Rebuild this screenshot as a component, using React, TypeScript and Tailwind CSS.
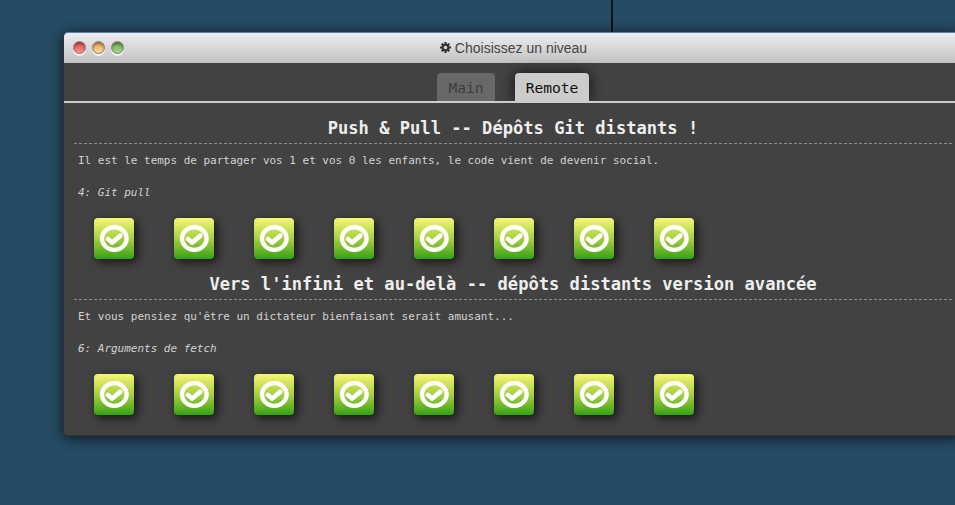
import React from "react";

const MONO = "font-['DejaVu_Sans_Mono',monospace]";

function LevelIcon() {
  return (
    <div className="flex h-[41px] w-10 items-center justify-center rounded-[4px] bg-linear-to-b from-[#f9f575] via-[#a3d040] to-[#2ea30d] shadow-[3px_3px_10px_rgba(0,0,0,0.7)]">
      <svg width="30" height="28" viewBox="0 0 30 28" fill="none" stroke="#fff" className="block">
        <ellipse cx="15.3" cy="13.4" rx="12.3" ry="11.4" strokeWidth="4.3" />
        <path d="M8.9 14 L13.3 17.6 L21.3 10.7" strokeWidth="4.6" strokeLinejoin="round" strokeLinecap="round" />
      </svg>
    </div>
  );
}

function Section({ title, about, level }: { title: string; about: string; level: string }) {
  return (
    <section className="h-[156px]">
      <h3 className="h-8 border-b border-dashed border-[#8e8e8e] text-center text-[17.1px] leading-[32px] font-bold text-[#eee]">
        {title}
      </h3>
      <p className="h-8 pl-[4px] text-[10.97px] leading-[34px] whitespace-nowrap text-[#d2d2d2]">{about}</p>
      <p className="h-8 pl-[4px] text-[10.97px] leading-[34px] whitespace-nowrap text-[#d2d2d2] italic">{level}</p>
      <div className="flex gap-10 pt-[10px] pl-5">
        {Array.from({ length: 8 }, (_, i) => (
          <LevelIcon key={i} />
        ))}
      </div>
    </section>
  );
}

function TrafficLight({ color }: { color: string }) {
  return (
    <span
      className={`h-[13px] w-[13px] rounded-full border border-[#85807c] shadow-[0_2px_0_rgba(255,255,255,0.8),inset_0_2px_2px_rgba(80,30,20,0.45)] ${color}`}
    />
  );
}

export default function App() {
  return (
    <main className="h-[505px] w-full overflow-hidden bg-[#264b64]">
      <div className="h-8 pl-[611px]">
        <div className="h-full w-[2px] bg-[#111]" />
      </div>
      <div className="ml-[63px] h-[404px] w-[900px] overflow-visible rounded-[5px] border border-[#303234] border-t-[#5784a6] bg-[#424242] shadow-[0_2px_14px_rgba(0,0,0,0.7)]">
        <header className="flex h-[30px] items-center rounded-t-[4px] bg-linear-to-b from-[#efedef] to-[#c2c2c2] pl-[10px]">
          <div className="-ml-px flex w-[101px] gap-[6px] pb-px">
            <TrafficLight color="bg-linear-to-b from-[#d94b4b] to-[#ff8c8c]" />
            <TrafficLight color="bg-linear-to-b from-[#dfa24e] to-[#ffd99b]" />
            <TrafficLight color="bg-linear-to-b from-[#62a84f] to-[#a4dc8c]" />
          </div>
          <div className="mr-[109px] flex flex-1 items-center justify-center gap-[4px] font-['Liberation_Sans',Arial,sans-serif] text-[14px] text-[#444]">
            <svg width="11" height="11" viewBox="0 0 12 12" className="mb-[2px] block">
              <g stroke="#333" strokeWidth="2.2">
                <path d="M6 0V12M0 6H12M1.8 1.8L10.2 10.2M10.2 1.8L1.8 10.2" />
              </g>
              <circle cx="6" cy="6" r="4.3" fill="#333" />
              <circle cx="6" cy="6" r="1.9" fill="#d9d9d9" />
            </svg>
            <span>Choisissez un niveau</span>
          </div>
        </header>
        <div className={MONO}>
          <nav className="flex h-10 items-end justify-center gap-5 border-b-2 border-[#ccc] text-[14.6px]">
            <div className="h-7 w-[58px] rounded-t-[4px] bg-[#686868] text-center leading-[29px] text-[#3c3c3c]">Main</div>
            <div className="h-7 w-[74px] rounded-t-[4px] bg-[#ccc] text-center leading-[29px] text-[#111] shadow-[0_0_14px_rgba(0,0,0,0.75)] [clip-path:inset(-20px_-20px_0_-20px)]">
              Remote
            </div>
          </nav>
          <div className="px-[10px] pt-[9px]">
            <Section
              title="Push & Pull -- Dépôts Git distants !"
              about="Il est le temps de partager vos 1 et vos 0 les enfants, le code vient de devenir social."
              level="4: Git pull"
            />
            <Section
              title="Vers l'infini et au-delà -- dépôts distants version avancée"
              about="Et vous pensiez qu'être un dictateur bienfaisant serait amusant..."
              level="6: Arguments de fetch"
            />
          </div>
        </div>
      </div>
    </main>
  );
}
